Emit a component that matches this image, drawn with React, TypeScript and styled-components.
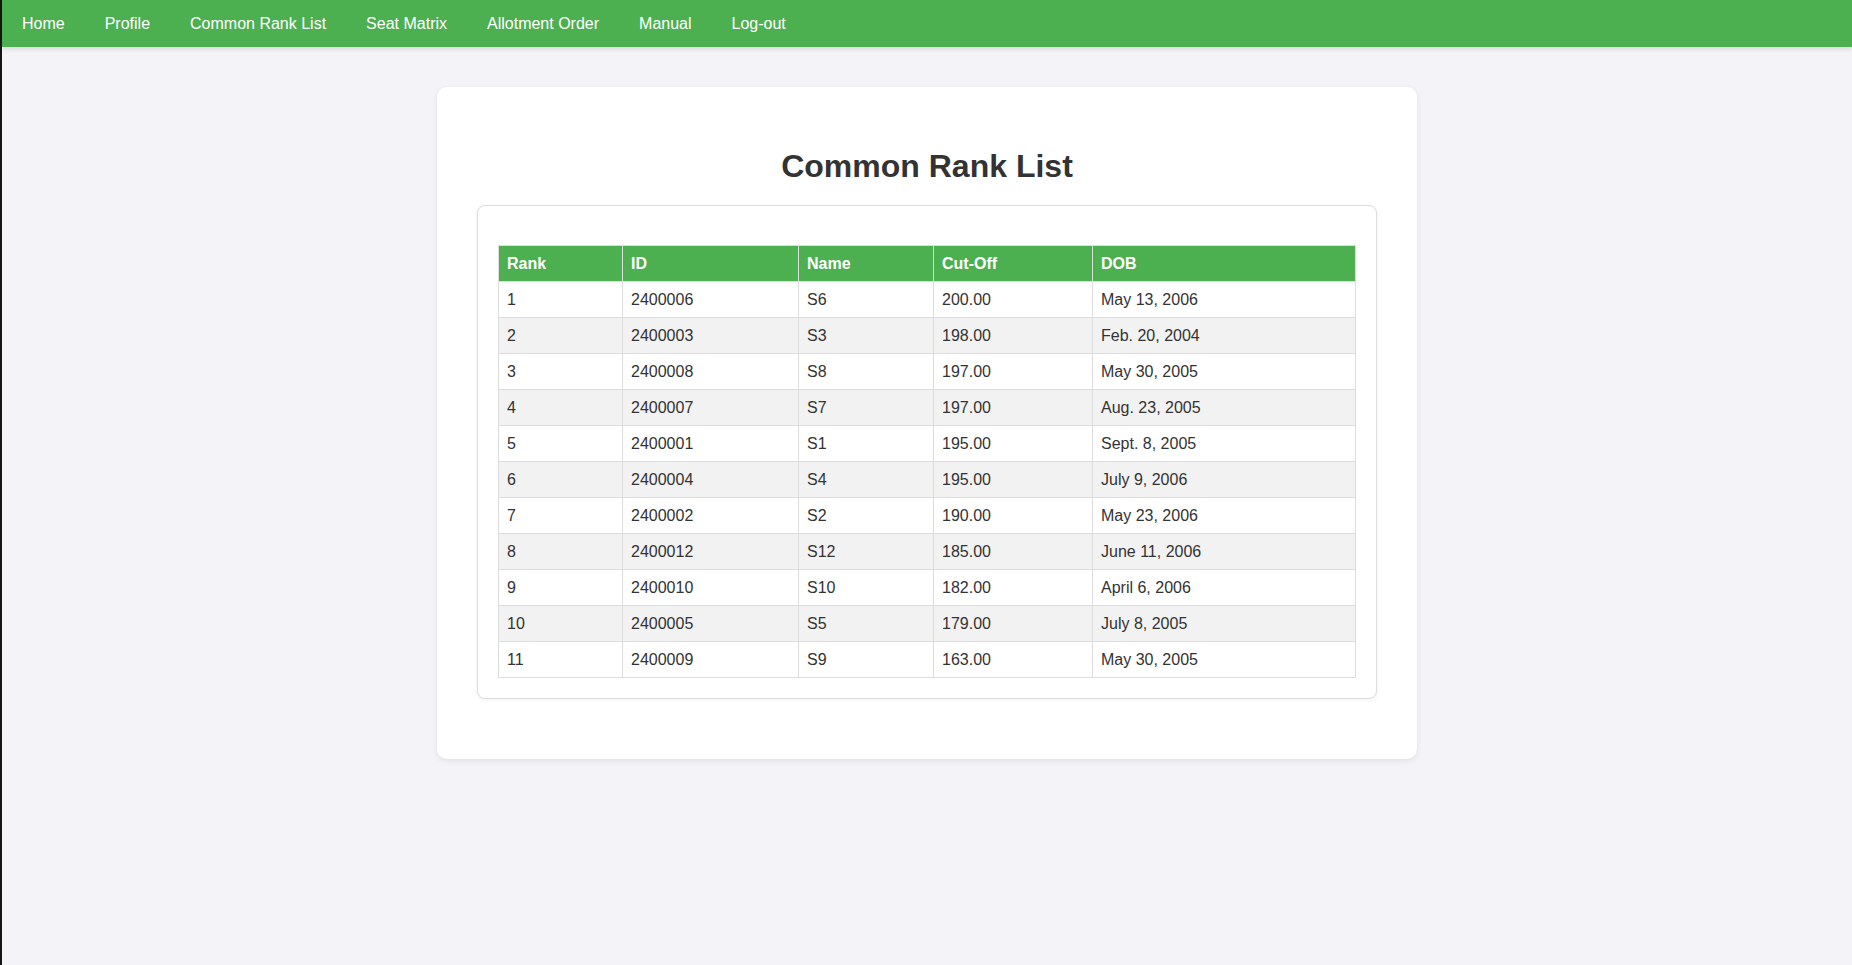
import React from "react";
import styled, { createGlobalStyle } from "styled-components";

const GlobalStyle = createGlobalStyle`
  html, body {
    margin: 0;
    padding: 0;
    background: #f4f4f8;
    font-family: "Liberation Sans", Arial, sans-serif;
  }
  * { box-sizing: border-box; }
`;

const Page = styled.div`
  min-height: 100vh;
  border-left: 2px solid #151515;
  background: #f4f4f8;
`;

const NavBar = styled.nav`
  display: flex;
  align-items: center;
  height: 47px;
  background: #4caf50;
  box-shadow: 0 2px 5px rgba(0, 0, 0, 0.12);
`;

const NavLink = styled.a`
  display: block;
  padding: 14px 20px;
  line-height: 19px;
  font-size: 16px;
  color: #ffffff;
  text-decoration: none;
  cursor: pointer;
`;

const Main = styled.main`
  padding: 40px 0;
`;

const Card = styled.section`
  width: 980px;
  margin: 0 auto;
  padding: 40px;
  background: #ffffff;
  border-radius: 10px;
  box-shadow: 0 2px 6px rgba(0, 0, 0, 0.08);
`;

const Title = styled.h2`
  margin: 21px 0 20px;
  text-align: center;
  font-size: 32px;
  font-weight: 700;
  line-height: 36.8px;
  color: #333333;
`;

const TableBox = styled.div`
  padding: 19px 20px 20px;
  background: #ffffff;
  border: 1px solid #dddddd;
  border-radius: 8px;
  box-shadow: 0 1px 4px rgba(0, 0, 0, 0.06);
  margin-bottom: 20px;
`;

const Table = styled.table`
  width: 100%;
  margin-top: 20px;
  border-collapse: collapse;
  table-layout: fixed;
  font-size: 16px;
`;

const HeadCell = styled.th<{ $w?: number }>`
  ${(p) => (p.$w ? `width: ${p.$w}px;` : "")}
  padding: 8px;
  line-height: 19px;
  text-align: left;
  font-weight: 700;
  color: #ffffff;
  background: #4caf50;
  border: 1px solid #dddddd;
`;

const Row = styled.tr<{ $alt: boolean }>`
  background: ${(p) => (p.$alt ? "#f2f2f2" : "#ffffff")};
`;

const Cell = styled.td`
  padding: 8px;
  line-height: 19px;
  color: #333333;
  border: 1px solid #dddddd;
`;

const rows = [
  ["1", "2400006", "S6", "200.00", "May 13, 2006"],
  ["2", "2400003", "S3", "198.00", "Feb. 20, 2004"],
  ["3", "2400008", "S8", "197.00", "May 30, 2005"],
  ["4", "2400007", "S7", "197.00", "Aug. 23, 2005"],
  ["5", "2400001", "S1", "195.00", "Sept. 8, 2005"],
  ["6", "2400004", "S4", "195.00", "July 9, 2006"],
  ["7", "2400002", "S2", "190.00", "May 23, 2006"],
  ["8", "2400012", "S12", "185.00", "June 11, 2006"],
  ["9", "2400010", "S10", "182.00", "April 6, 2006"],
  ["10", "2400005", "S5", "179.00", "July 8, 2005"],
  ["11", "2400009", "S9", "163.00", "May 30, 2005"],
];

const navItems = ["Home", "Profile", "Common Rank List", "Seat Matrix", "Allotment Order", "Manual", "Log-out"];

export default function App() {
  return (
    <>
      <GlobalStyle />
      <Page>
        <NavBar>
          {navItems.map((n) => (
            <NavLink key={n}>{n}</NavLink>
          ))}
        </NavBar>
        <Main>
          <Card>
            <Title>Common Rank List</Title>
            <TableBox>
              <Table>
                <thead>
                  <tr>
                    <HeadCell $w={124}>Rank</HeadCell>
                    <HeadCell $w={176}>ID</HeadCell>
                    <HeadCell $w={135}>Name</HeadCell>
                    <HeadCell $w={159}>Cut-Off</HeadCell>
                    <HeadCell>DOB</HeadCell>
                  </tr>
                </thead>
                <tbody>
                  {rows.map((r, i) => (
                    <Row key={r[0]} $alt={i % 2 === 1}>
                      {r.map((c, j) => (
                        <Cell key={j}>{c}</Cell>
                      ))}
                    </Row>
                  ))}
                </tbody>
              </Table>
            </TableBox>
          </Card>
        </Main>
      </Page>
    </>
  );
}
